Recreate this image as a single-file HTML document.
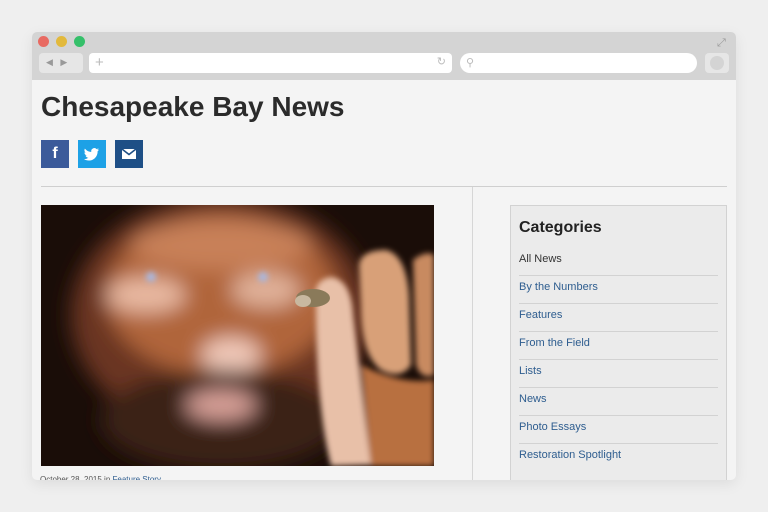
<!DOCTYPE html>
<html><head><style>
*{margin:0;padding:0;box-sizing:border-box}
body{width:768px;height:512px;background:#efefef;font-family:"Liberation Sans",sans-serif;position:relative;overflow:hidden}
.win{position:absolute;left:32px;top:32px;width:704px;height:448px;background:#f4f4f4;border-radius:5px;overflow:hidden;box-shadow:0 4px 14px rgba(0,0,0,.08)}
.bar{position:absolute;left:0;top:0;width:704px;height:48px;background:#d4d4d4}
.dot{position:absolute;top:4px;width:11px;height:11px;border-radius:50%}
.a{position:absolute}
h1{position:absolute;left:9px;top:59px;font-size:28px;font-weight:bold;color:#2b2b2b;letter-spacing:0px}
.soc{position:absolute;top:108px;width:28px;height:28px;color:#fff;text-align:center}
.cat{position:absolute;left:478px;top:173px;width:217px;height:290px;background:#ebebeb;border:1px solid #d2d2d2}
.cat h2{position:absolute;left:8px;top:13px;font-size:16px;color:#222}
.cat ul{position:absolute;left:8px;top:42px;width:199px;list-style:none}
.cat li{height:28px;border-bottom:1px solid #d2d2d2;font-size:11px;color:#2e5d8f;line-height:22px}
</style></head><body>
<div class="win">
<div class="bar">
<div class="dot" style="left:6px;background:#e86a62"></div>
<div class="dot" style="left:24px;background:#e2b93c"></div>
<div class="dot" style="left:42px;background:#35c06a"></div>
<div class="a" style="left:685px;top:5px;color:#999;font-size:11px">⤢</div>
<div class="a" style="left:7px;top:21px;width:44px;height:20px;background:#e6e6e6;border-radius:4px;color:#999;font-size:9px;padding:4px 0 0 7px">◀ &nbsp; ▶</div>
<div class="a" style="left:57px;top:21px;width:363px;height:20px;background:#fff;border-radius:4px;color:#bbb;font-size:15px;padding-left:6px;line-height:19px">+<span style="position:absolute;right:6px;font-size:11px">↻</span></div>
<div class="a" style="left:428px;top:21px;width:237px;height:20px;background:#fff;border-radius:10px;color:#bbb;font-size:11px;padding:3px 0 0 6px">⚲</div>
<div class="a" style="left:673px;top:21px;width:24px;height:20px;background:#e6e6e6;border-radius:4px"><div class="a" style="left:5px;top:3px;width:14px;height:14px;border-radius:50%;background:#d4d4d4"></div></div>
</div>
<h1>Chesapeake Bay News</h1>
<div class="soc" style="left:9px;background:#3b5a9a;font-weight:bold;font-size:16px;line-height:28px">f</div>
<div class="soc" style="left:46px;background:#1da1e6"><svg width="28" height="28" viewBox="0 0 28 28"><path d="M21 9.5c-.6.3-1.2.4-1.8.5.7-.4 1.1-1 1.4-1.7-.6.4-1.3.6-2 .8a3.1 3.1 0 0 0-5.3 2.8c-2.6-.1-4.9-1.4-6.4-3.3-.9 1.5-.4 3.300.9 4.2-.5 0-1-.2-1.4-.4 0 1.5 1.1 2.8 2.5 3.1-.5.1-.9.2-1.4.1.4 1.3 1.6 2.1 2.9 2.2A6.3 6.3 0 0 1 6 19.1c1.4.9 3 1.4 4.8 1.4 5.8 0 9-4.9 8.8-9.3.6-.4 1.1-1 1.4-1.7z" fill="#fff"/></svg></div>
<div class="soc" style="left:83px;background:#1e4f86"><svg width="28" height="28" viewBox="0 0 28 28"><rect x="7" y="9" width="14" height="10" fill="#fff"/><path d="M7 9l7 5.5L21 9" stroke="#1e4f86" stroke-width="1.6" fill="none"/></svg></div>
<div class="a" style="left:9px;top:154px;width:686px;height:1px;background:#cfcfcf"></div>
<div class="a" style="left:440px;top:155px;width:1px;height:300px;background:#d6d6d6"></div>
<svg class="a" style="left:9px;top:173px" width="393" height="261" viewBox="0 0 393 261">
<defs><filter id="b" x="-50%" y="-50%" width="200%" height="200%"><feGaussianBlur stdDeviation="10"/></filter><filter id="s"><feGaussianBlur stdDeviation="3"/></filter></defs>
<rect width="393" height="261" fill="#1a0d08"/>
<g filter="url(#b)">
<ellipse cx="180" cy="110" rx="150" ry="120" fill="#6a3520"/>
<ellipse cx="180" cy="90" rx="115" ry="80" fill="#b0653a"/>
<ellipse cx="180" cy="40" rx="90" ry="25" fill="#c88058"/>
<ellipse cx="105" cy="90" rx="40" ry="18" fill="#e8b8a0"/>
<ellipse cx="225" cy="85" rx="35" ry="18" fill="#e0b098"/>
<ellipse cx="190" cy="150" rx="30" ry="18" fill="#f0c8b8"/>
<ellipse cx="180" cy="215" rx="120" ry="50" fill="#3a2218"/>
<ellipse cx="180" cy="200" rx="35" ry="15" fill="#d8a098"/>
</g>
<g filter="url(#s)">
<circle cx="110" cy="72" r="5" fill="#a8b8e0"/><circle cx="222" cy="72" r="5" fill="#a8b8e0"/>
<path d="M275 100 Q270 75 290 72 Q310 75 312 110 L330 260 L290 261 Q275 200 275 100Z" fill="#e8c0a8"/>
<path d="M318 60 Q320 45 345 45 Q365 50 368 90 L370 160 Q360 175 340 165 Q320 150 320 100Z" fill="#d8a078"/>
<path d="M372 55 Q385 45 393 50 L393 170 Q380 175 375 160Z" fill="#c88a60"/>
<path d="M320 160 Q360 180 393 175 L393 261 L330 261Z" fill="#b87040"/>
</g>
<ellipse cx="272" cy="93" rx="17" ry="9" fill="#8a7a5a"/>
<ellipse cx="262" cy="96" rx="8" ry="6" fill="#c8b8a0"/>
</svg>
<div class="a" style="left:8px;top:443px;font-size:8px;color:#555">October 28, 2015 in <span style="color:#2e5d8f">Feature Story</span></div>
<div class="cat">
<h2>Categories</h2>
<ul>
<li style="color:#333">All News</li><li>By the Numbers</li><li>Features</li><li>From the Field</li><li>Lists</li><li>News</li><li>Photo Essays</li><li style="border:0">Restoration Spotlight</li>
</ul>
</div>
</div>
</body></html>
